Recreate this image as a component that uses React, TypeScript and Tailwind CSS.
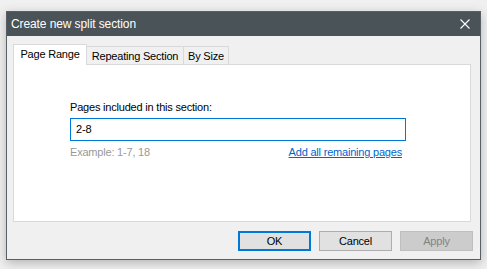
const font = { fontFamily: '"Liberation Sans", Arial, sans-serif' };

function Tab({ label, width, active }: { label: string; width: string; active?: boolean }) {
  return active ? (
    <div
      className={`relative z-10 -mb-px flex h-[21px] items-center justify-center border border-b-0 border-[#d9d9d9] bg-white pb-[1px] text-black ${width}`}
    >
      {label}
    </div>
  ) : (
    <div
      className={`-ml-px flex h-[18px] items-center justify-center border border-b-0 border-[#d9d9d9] bg-[#f0f0f0] pt-[1px] text-black ${width}`}
    >
      {label}
    </div>
  );
}

export default function App() {
  return (
    <div
      className="h-[269px] w-[487px] bg-[#f0f0f0] pl-[6px] pt-[11px] text-[11px] tracking-[-0.2px]"
      style={font}
    >
      <div className="flex h-[249px] w-[475px] flex-col border border-[#595f63] bg-[#f0f0f0] shadow-[0_3px_10px_rgba(0,0,0,0.25)]">
        <div className="flex h-[24px] items-center justify-between bg-[#4a5358] pl-[4px] pr-[10px] text-[12px] tracking-[-0.1px] text-white">
          <span>Create new split section</span>
          <svg width="10" height="10" viewBox="0 0 10 10">
            <path d="M0.5 0.5 L9.5 9.5 M9.5 0.5 L0.5 9.5" stroke="#fff" strokeWidth="1.1" />
          </svg>
        </div>
        <div className="flex flex-1 flex-col pl-[6px] pr-[9px] pt-[8px]">
          <div className="flex items-end">
            <Tab label="Page Range" width="w-[74px]" active />
            <Tab label="Repeating Section" width="w-[98px]" />
            <Tab label="By Size" width="w-[46px]" />
          </div>
          <div className="h-[158px] border border-[#d9d9d9] bg-white pl-[56px] pt-[35px]">
            <div className="leading-[14px] text-black">
              Pages included in this section:
            </div>
            <div className="mt-[4px] flex h-[23px] w-[336px] items-center border border-[#0078d7] pl-[5px] text-black">
              2-8
            </div>
            <div className="mt-[4px] flex w-[332px] justify-between leading-[14px]">
              <span className="text-[#999999]">Example: 1-7, 18</span>
              <a href="#" className="text-[#0066cc] underline">
                Add all remaining pages
              </a>
            </div>
          </div>
          <div className="mt-[9px] flex justify-end gap-[8px]">
            <button className="h-[20px] w-[73px] border-2 border-[#0078d7] bg-[#e1e1e1] text-black">
              OK
            </button>
            <button className="h-[20px] w-[73px] border border-[#adadad] bg-[#e1e1e1] text-black">
              Cancel
            </button>
            <button className="-mr-[2px] h-[20px] w-[73px] border border-[#bfbfbf] bg-[#cccccc] text-[#838383]">
              Apply
            </button>
          </div>
        </div>
      </div>
    </div>
  );
}
